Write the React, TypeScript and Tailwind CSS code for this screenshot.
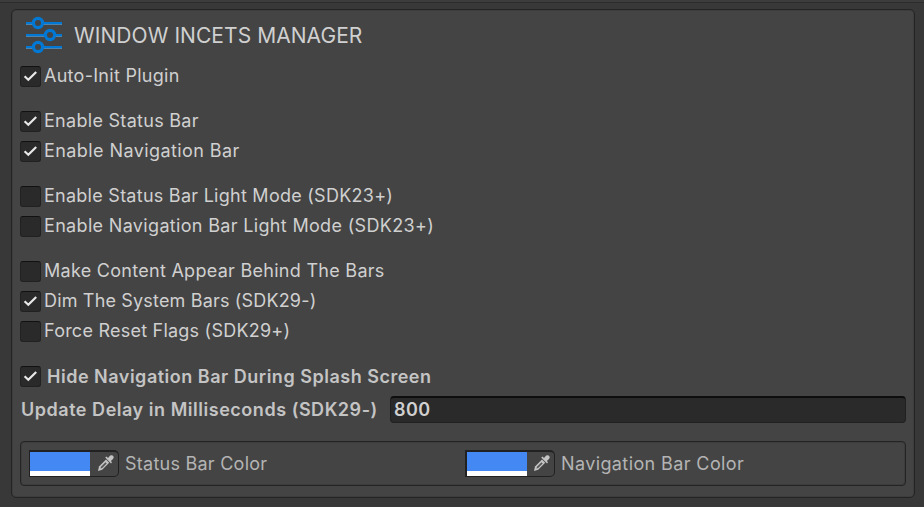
function Check({ on }: { on?: boolean }) {
  return (
    <span className="block h-[21px] w-[21px] shrink-0 rounded-[3px] border border-[#212121] border-t-[#111111] bg-[#2a2a2a]">
      {on && (
        <svg viewBox="0 0 19 19" className="h-[19px] w-[19px]" fill="none" stroke="#e8e8e8" strokeWidth="2.2">
          <path d="M3.6 9.3 L7.3 12.8 L15.2 5" />
        </svg>
      )}
    </span>
  );
}

function Row({ label, on, className = "" }: { label: string; on?: boolean; className?: string }) {
  return (
    <label className={`flex h-[21px] items-center gap-[3px] ${className}`}>
      <Check on={on} />
      <span className="relative -top-px whitespace-nowrap text-[18px] leading-[21px]">{label}</span>
    </label>
  );
}

function ColorField({ label, className = "", inset = "", pick = "" }: { label: string; className?: string; inset?: string; pick?: string }) {
  return (
    <div className={`flex w-[436px] items-center ${className}`}>
      <div className={`flex h-[27px] w-[90px] shrink-0 rounded-r-[5px] border border-t-2 border-[#212121] ${inset}`}>
        <div className="h-[24px] w-[60px] shrink-0 border-b-[5px] border-white bg-[#4488f4]" />
        <svg viewBox="0 0 18 18" className={`mt-[2px] h-[18px] w-[18px] shrink-0 ${pick}`}>
          <path d="M1 17 L2 12.5 L9 5.5 L12.2 8.7 L5.2 15.8 Z" fill="#c4c4c4" />
          <path d="M3.4 14.6 L4 12.7 L8.5 8.2 L9.7 9.4 L5.2 13.9 Z" fill="#555" />
          <path d="M8.2 3.6 L9.5 2.6 L11 3.9 L13.2 1.6 Q14.7 .6 16.1 1.8 Q17.3 3.2 16.2 4.7 L13.9 6.9 L15 8.3 L14 9.5 Z" fill="#c4c4c4" />
        </svg>
      </div>
      <span className="ml-[6px] whitespace-nowrap text-[18px] leading-[21px] text-[#b4b4b4]">{label}</span>
    </div>
  );
}

export default function App() {
  return (
    <main className="h-[507px] w-[924px] overflow-hidden bg-[#383838] font-['Inter',sans-serif] text-[#d0d0d0]">
      <div className="h-[3px] border-b border-[#2c2c2c] bg-[#3c3c3c]" />
      <section className="ml-[11px] mt-[6px] h-[489px] w-[904px] rounded-[5px] border border-[#242424] bg-[#444444] px-[8px] shadow-[inset_0_0_0_1px_#3d3d3d]">
        <header className="flex h-[56px] items-start pt-[5px]">
          <svg viewBox="0 0 38 40" className="ml-[5px] h-[40px] w-[38px]" fill="none">
            <path d="M1 9.5H37M1 21.5H37M1 33.5H37" stroke="#4e83ae" strokeWidth="1" />
            <path d="M1 8H37M1 20H37M1 32H37" stroke="#0078d4" strokeWidth="2" />
            <g fill="#444" stroke="#0078d4" strokeWidth="3.2">
              <circle cx="13" cy="8" r="4.6" />
              <circle cx="25" cy="20" r="4.6" />
              <circle cx="13" cy="32" r="4.6" />
            </g>
          </svg>
          <h1 className="ml-[11px] mt-[8px] whitespace-nowrap text-[21px] leading-[26px] tracking-[0.06px]">WINDOW INCETS MANAGER</h1>
        </header>
        <Row label="Auto-Init Plugin" on className="tracking-[0.28px]" />
        <Row label="Enable Status Bar" on className="mt-[24px] tracking-[0.29px]" />
        <Row label="Enable Navigation Bar" on className="mt-[9px] tracking-[0.42px]" />
        <Row label="Enable Status Bar Light Mode (SDK23+)" className="mt-[24px] tracking-[0.26px]" />
        <Row label="Enable Navigation Bar Light Mode (SDK23+)" className="mt-[9px] tracking-[0.33px]" />
        <Row label="Make Content Appear Behind The Bars" className="mt-[24px] tracking-[0.28px]" />
        <Row label="Dim The System Bars (SDK29-)" on className="mt-[9px] tracking-[0.17px]" />
        <Row label="Force Reset Flags (SDK29+)" className="mt-[9px] tracking-[0.23px]" />
        <label className="mt-[24px] flex h-[21px] items-center gap-[6px]">
          <Check on />
          <span className="whitespace-nowrap text-[18px] font-semibold leading-[21px] tracking-[0.51px] text-[#c4c4c4]">Hide Navigation Bar During Splash Screen</span>
        </label>
        <div className="mt-[9px] flex h-[27px] items-center">
          <span className="w-[370px] whitespace-nowrap pl-px text-[18px] font-semibold leading-[21px] tracking-[0.53px] text-[#c4c4c4]">Update Delay in Milliseconds (SDK29-)</span>
          <div className="flex h-[27px] w-[516px] items-center rounded-[4px] border border-t-2 border-[#212121] border-t-[#0e0e0e] bg-[#2a2a2a] pb-px pl-[3px] text-[18px] font-semibold leading-[21px] tracking-[0.45px]">800</div>
        </div>
        <div className="mt-[18px] flex h-[45px] w-[886px] items-center rounded-[4px] border border-[#242424] pl-[8px] shadow-[inset_0_0_0_1px_#3d3d3d]">
          <ColorField label="Status Bar Color" className="tracking-[0.25px]" pick="ml-[7px]" />
          <ColorField label="Navigation Bar Color" className="tracking-[0.39px]" inset="border-l-2" pick="ml-[6px]" />
        </div>
      </section>
    </main>
  );
}
